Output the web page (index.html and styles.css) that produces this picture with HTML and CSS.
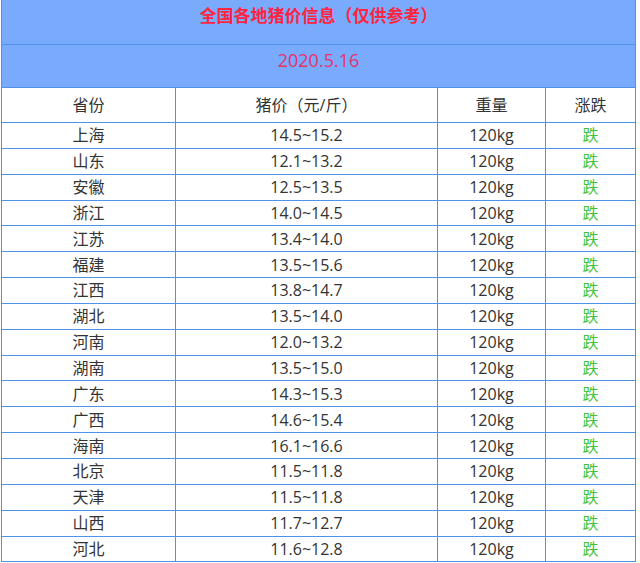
FILE: index.html
```html
<!DOCTYPE html>
<html lang="zh">
<head>
<meta charset="utf-8">
<title>全国各地猪价信息</title>
<link rel="stylesheet" href="styles.css">
</head>
<body>
<table class="price-table">
  <colgroup>
    <col class="c-prov"><col class="c-price"><col class="c-weight"><col class="c-trend">
  </colgroup>
  <tr class="band band-title"><td colspan="4">全国各地猪价信息（仅供参考）</td></tr>
  <tr class="band band-date"><td colspan="4">2020.5.16</td></tr>
  <tr class="head"><td>省份</td><td>猪价（元/斤）</td><td>重量</td><td>涨跌</td></tr>
  <tr class="row"><td>上海</td><td>14.5~15.2</td><td>120kg</td><td class="down">跌</td></tr>
  <tr class="row"><td>山东</td><td>12.1~13.2</td><td>120kg</td><td class="down">跌</td></tr>
  <tr class="row"><td>安徽</td><td>12.5~13.5</td><td>120kg</td><td class="down">跌</td></tr>
  <tr class="row"><td>浙江</td><td>14.0~14.5</td><td>120kg</td><td class="down">跌</td></tr>
  <tr class="row"><td>江苏</td><td>13.4~14.0</td><td>120kg</td><td class="down">跌</td></tr>
  <tr class="row"><td>福建</td><td>13.5~15.6</td><td>120kg</td><td class="down">跌</td></tr>
  <tr class="row"><td>江西</td><td>13.8~14.7</td><td>120kg</td><td class="down">跌</td></tr>
  <tr class="row"><td>湖北</td><td>13.5~14.0</td><td>120kg</td><td class="down">跌</td></tr>
  <tr class="row"><td>河南</td><td>12.0~13.2</td><td>120kg</td><td class="down">跌</td></tr>
  <tr class="row"><td>湖南</td><td>13.5~15.0</td><td>120kg</td><td class="down">跌</td></tr>
  <tr class="row"><td>广东</td><td>14.3~15.3</td><td>120kg</td><td class="down">跌</td></tr>
  <tr class="row"><td>广西</td><td>14.6~15.4</td><td>120kg</td><td class="down">跌</td></tr>
  <tr class="row"><td>海南</td><td>16.1~16.6</td><td>120kg</td><td class="down">跌</td></tr>
  <tr class="row"><td>北京</td><td>11.5~11.8</td><td>120kg</td><td class="down">跌</td></tr>
  <tr class="row"><td>天津</td><td>11.5~11.8</td><td>120kg</td><td class="down">跌</td></tr>
  <tr class="row"><td>山西</td><td>11.7~12.7</td><td>120kg</td><td class="down">跌</td></tr>
  <tr class="row"><td>河北</td><td>11.6~12.8</td><td>120kg</td><td class="down">跌</td></tr>
</table>
</body>
</html>
```

FILE: styles.css
```css
html, body {
  margin: 0;
  padding: 0;
  background: #ffffff;
}
body {
  font-family: "Open Sans", "Noto Sans CJK SC", sans-serif;
  color: #333333;
}
.price-table {
  border-collapse: collapse;
  table-layout: fixed;
  width: 634px;
  margin: -1px 0 0 1px;
}
.c-prov { width: 174px; }
.c-price { width: 262px; }
.c-weight { width: 108px; }
.c-trend { width: 90px; }
.price-table td {
  border: 1px solid #4d93ea;
  text-align: center;
  padding: 0;
  font-size: 16px;
  line-height: 20px;
}
.band td {
  background: #79aafc;
  vertical-align: top;
}
.band-title td {
  height: 45px;
  padding-top: 5px;
  box-sizing: border-box;
  color: #ff2440;
  font-family: "Noto Sans CJK SC", sans-serif;
  font-weight: bold;
  font-size: 17px;
}
.band-date td {
  height: 43px;
  padding-top: 3px;
  box-sizing: border-box;
  color: #e5336a;
  font-size: 18px;
  line-height: 24px;
}
.head td {
  height: 35px;
  box-sizing: border-box;
}
.row td {
  height: 25.85px;
  box-sizing: border-box;
}
.price-table td.down {
  color: #3fc435;
}
```
